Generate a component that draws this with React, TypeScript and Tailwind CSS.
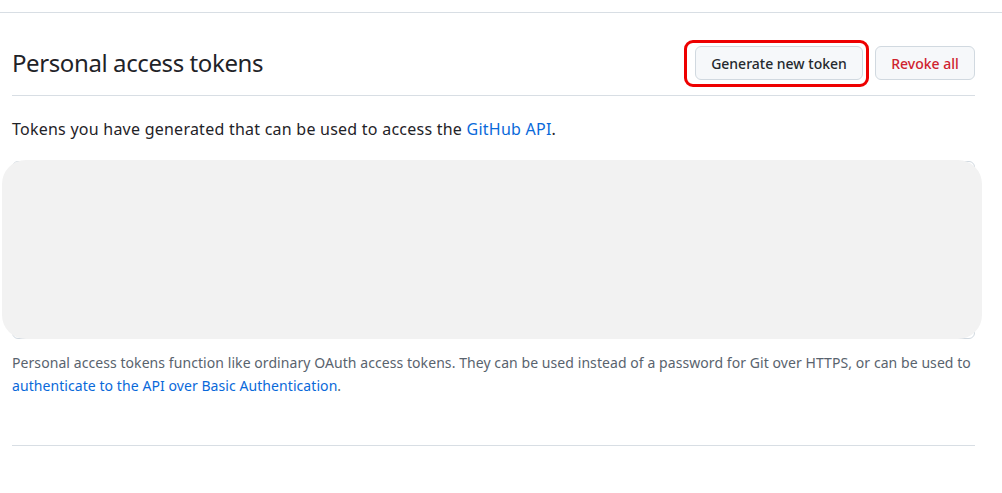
export default function App() {
    return (
        <div className="w-full h-[493px] bg-white text-[#1f2328]" style={{ fontFamily: '"Noto Sans", "Liberation Sans", sans-serif' }}>
            <div className="h-[13px] border-b border-[#d8dee4]" />
            <div className="ml-3 w-[963px]">
                <div className="flex items-center justify-between pt-[33px] pb-[15px] border-b border-[#d8dee4]">
                    <h2 className="text-[24px] leading-[30px] font-normal tracking-[-0.4px]">Personal access tokens</h2>
                    <div className="flex gap-3">
                        <div className="relative">
                            {/* red highlight drawn round the button */}
                            <div className="absolute -left-[11px] -right-[6px] -top-[6px] -bottom-[7px] border-[3px] border-[#ee0000] rounded-[9px]" />
                            <button className="relative h-[34px] w-[168px] rounded-md border border-[#d1d9e0] bg-[#f6f8fa] text-[14px] font-medium text-[#25292e]">
                                Generate new token
                            </button>
                        </div>
                        <button className="h-[34px] w-[100px] rounded-md border border-[#d1d9e0] bg-[#f6f8fa] text-[14px] font-medium text-[#cf222e]">
                            Revoke all
                        </button>
                    </div>
                </div>

                <p className="mt-[21px] text-[16px] leading-6 tracking-[0.24px]">
                    Tokens you have generated that can be used to access the <a className="text-[#0969da]">GitHub API</a>.
                </p>

                <div className="relative mt-5 h-[178px] rounded-md border border-[#d1d9e0]">
                    {/* grey block covering the token list */}
                    <div className="absolute -left-[11px] -right-[8px] -top-[2px] -bottom-[1px] rounded-[24px] bg-[#f2f2f2]" />
                </div>

                <p className="mt-3 text-[14px] leading-[23px] tracking-[0.07px] text-[#59636e]">
                    Personal access tokens function like ordinary OAuth access tokens. They can be used instead of a password for Git over HTTPS, or can be used to{' '}
                    <a className="text-[#0969da]">authenticate to the API over Basic Authentication</a>.
                </p>

                <div className="mt-[48px] border-t border-[#d8dee4]" />
            </div>
        </div>
    );
}
